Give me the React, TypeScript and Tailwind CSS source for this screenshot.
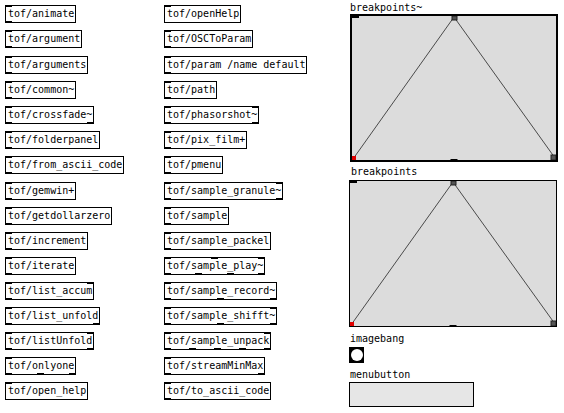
type Obj = { t: string; i: number; o: number };

const col1: Obj[] = [
  { t: "tof/animate", i: 1, o: 1 },
  { t: "tof/argument", i: 1, o: 1 },
  { t: "tof/arguments", i: 1, o: 1 },
  { t: "tof/common~", i: 1, o: 1 },
  { t: "tof/crossfade~", i: 1, o: 2 },
  { t: "tof/folderpanel", i: 1, o: 1 },
  { t: "tof/from_ascii_code", i: 1, o: 1 },
  { t: "tof/gemwin+", i: 1, o: 1 },
  { t: "tof/getdollarzero", i: 1, o: 1 },
  { t: "tof/increment", i: 1, o: 1 },
  { t: "tof/iterate", i: 1, o: 1 },
  { t: "tof/list_accum", i: 2, o: 1 },
  { t: "tof/list_unfold", i: 1, o: 2 },
  { t: "tof/listUnfold", i: 2, o: 2 },
  { t: "tof/onlyone", i: 1, o: 3 },
  { t: "tof/open_help", i: 1, o: 0 },
];

const col2: Obj[] = [
  { t: "tof/openHelp", i: 1, o: 0 },
  { t: "tof/OSCToParam", i: 1, o: 1 },
  { t: "tof/param /name default", i: 1, o: 1 },
  { t: "tof/path", i: 1, o: 1 },
  { t: "tof/phasorshot~", i: 2, o: 2 },
  { t: "tof/pix_film+", i: 1, o: 1 },
  { t: "tof/pmenu", i: 1, o: 1 },
  { t: "tof/sample_granule~", i: 2, o: 2 },
  { t: "tof/sample", i: 1, o: 1 },
  { t: "tof/sample_packel", i: 1, o: 1 },
  { t: "tof/sample_play~", i: 3, o: 4 },
  { t: "tof/sample_record~", i: 1, o: 3 },
  { t: "tof/sample_shifft~", i: 2, o: 3 },
  { t: "tof/sample_unpack", i: 2, o: 5 },
  { t: "tof/streamMinMax", i: 1, o: 2 },
  { t: "tof/to_ascii_code", i: 1, o: 1 },
];

function Ports({ n, side }: { n: number; side: "top" | "bottom" }) {
  if (n === 0) return null;
  return (
    <div
      className={`absolute left-[-1px] right-[-1px] flex justify-between ${
        side === "top" ? "top-[-1px]" : "bottom-[-1px]"
      } ${n === 1 ? "justify-start" : ""}`}
    >
      {Array.from({ length: n }).map((_, k) => (
        <div key={k} className="h-[2px] w-[7px] bg-black" />
      ))}
    </div>
  );
}

// rows 2 and 7 sit one pixel lower in the patch
function PdBox({ o, idx }: { o: Obj; idx: number }) {
  return (
    <div
      className={`relative h-[18px] self-start border border-black bg-white pl-[2px] pr-[1px] leading-[16px] whitespace-pre ${
        idx === 2 || idx === 7 ? "mt-[1px]" : ""
      }`}
    >
      <Ports n={o.i} side="top" />
      {o.t}
      <Ports n={o.o} side="bottom" />
    </div>
  );
}

function Graph({ thick, w, h }: { thick: boolean; w: number; h: number }) {
  const b = thick ? 2 : 1;
  const iw = w - 2 * b;
  const ih = h - 2 * b;
  const top = { x: iw / 2, y: 1 };
  const bl = { x: 1, y: ih - 1 };
  const br = { x: iw - 1, y: ih - 2 };
  return (
    <div
      className={`relative bg-[#dcdcdc] ${thick ? "border-2" : "border"} border-black`}
      style={{ width: w, height: h }}
    >
      <svg className="absolute inset-0" width={iw} height={ih}>
        <polyline
          points={`${bl.x},${bl.y} ${top.x},${top.y} ${br.x},${br.y}`}
          fill="none"
          stroke="#4a4a4a"
          strokeWidth="1"
        />
        <rect x={top.x - 2} y={0} width={5} height={4} fill="#555" stroke="#222" strokeWidth="1" />
        <rect x={0} y={ih - 4} width={4} height={4} fill="#e00000" />
        <rect x={iw - 5} y={ih - 5} width={5} height={5} fill="#555" stroke="#222" strokeWidth="1" />
      </svg>
      <div className="absolute left-0 top-[-1px] h-[3px] w-[7px] bg-black" />
      <div className="absolute bottom-[-1px] left-1/2 h-[2px] w-[7px] -translate-x-1/2 bg-black" />
    </div>
  );
}

export default function App() {
  return (
    <div
      className="flex h-[413px] w-[564px] overflow-hidden bg-white text-[10px] text-black"
      style={{ fontFamily: '"DejaVu Sans Mono", monospace' }}
    >
      <div className="flex w-[164px] flex-col gap-[7px] pl-[5px] pt-[5px]">
        {col1.map((o, i) => (
          <PdBox key={o.t} o={o} idx={i} />
        ))}
      </div>
      <div className="flex w-[185px] flex-col gap-[7px] pt-[5px]">
        {col2.map((o, i) => (
          <PdBox key={o.t} o={o} idx={i} />
        ))}
      </div>
      <div className="flex flex-col">
        <div className="pl-[1px] pt-[1px] leading-[13px]">breakpoints~</div>
        <div className="pl-[1px]">
          <Graph thick w={208} h={148} />
        </div>
        <div className="mt-[3px] pl-[2px] leading-[13px]">breakpoints</div>
        <div className="mt-[2px]">
          <Graph thick={false} w={208} h={147} />
        </div>
        <div className="mt-[5px] pl-[1px] leading-[13px]">imagebang</div>
        <div className="mt-[2px] flex h-[16px] w-[15px] items-center justify-center bg-black">
          <div className="h-[12px] w-[12px] rounded-full bg-white" />
        </div>
        <div className="mt-[5px] pl-[1px] leading-[13px]">menubutton</div>
        <div className="mt-[1px] h-[25px] w-[125px] border border-black bg-[#e6e6e6]" />
      </div>
    </div>
  );
}
